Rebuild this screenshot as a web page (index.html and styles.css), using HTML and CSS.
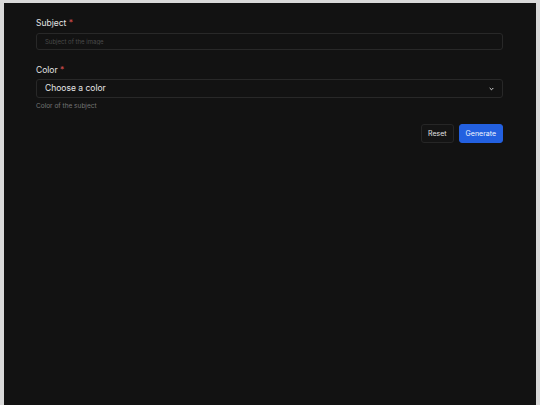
FILE: index.html
```html
<!DOCTYPE html>
<html>
<head>
<meta charset="utf-8">
<link rel="stylesheet" href="styles.css">
</head>
<body>
<div class="app">
  <form class="form">
    <div class="field">
      <label class="label">Subject <span class="req">*</span></label>
      <input class="input" type="text" placeholder="Subject of the image">
    </div>
    <div class="field">
      <label class="label">Color <span class="req">*</span></label>
      <div class="select">
        <span class="select-text">Choose a color</span>
        <svg class="chev" width="5" height="4" viewBox="0 0 5 4"><path d="M0.7 1 L2.5 2.8 L4.3 1" fill="none" stroke="#dcdcdc" stroke-width="1"/></svg>
      </div>
      <div class="help">Color of the subject</div>
    </div>
    <div class="actions">
      <button type="button" class="btn btn-reset">Reset</button>
      <button type="button" class="btn btn-primary">Generate</button>
    </div>
  </form>
</div>
</body>
</html>
```
FILE: styles.css
```css
html, body {
  margin: 0;
  padding: 0;
  background: #d9d9d9;
  height: 100%;
  overflow: hidden;
}
.app {
  margin: 3px 4px 0 4px;
  background: #121212;
  height: 420px;
  padding: 15px 33px 0 32px;
  box-sizing: border-box;
  font-family: Inter, "Noto Sans", sans-serif;
}
.form {
  display: flex;
  flex-direction: column;
}
.field {
  display: flex;
  flex-direction: column;
  margin-bottom: 15px;
}
.field:nth-child(2) {
  margin-bottom: 14px;
}
.label {
  font-size: 8.5px;
  line-height: 11px;
  color: #e3e3e3;
  margin-bottom: 4px;
}
.field:nth-child(2) .label {
  margin-bottom: 3px;
}
.req {
  color: #c94a4a;
}
.input {
  height: 17px;
  box-sizing: border-box;
  background: #121212;
  border: 1px solid #282828;
  border-radius: 3px;
  padding: 0 8px;
  margin: 0;
  font-family: Inter, sans-serif;
  font-size: 6px;
  color: #ddd;
  outline: none;
}
.input::placeholder {
  color: #4a4a4a;
}
.select {
  height: 19px;
  box-sizing: border-box;
  border: 1px solid #282828;
  border-radius: 3px;
  display: flex;
  align-items: center;
  justify-content: space-between;
  padding: 0 8px 0 8px;
}
.select-text {
  font-size: 8.5px;
  line-height: 11px;
  color: #e6e6e6;
}
.help {
  margin-top: 4px;
  font-size: 6.5px;
  line-height: 8px;
  color: #767676;
}
.actions {
  display: flex;
  justify-content: flex-end;
  gap: 5px;
}
.btn {
  height: 19px;
  border-radius: 3px;
  font-family: Inter, sans-serif;
  font-size: 7px;
  padding: 0 6px;
  margin: 0;
  cursor: pointer;
}
.btn-reset {
  background: #141414;
  border: 1px solid #262626;
  color: #e2e2e2;
}
.btn-primary {
  background: #2360e0;
  border: 1px solid #2360e0;
  color: #f2f6ff;
}
```
